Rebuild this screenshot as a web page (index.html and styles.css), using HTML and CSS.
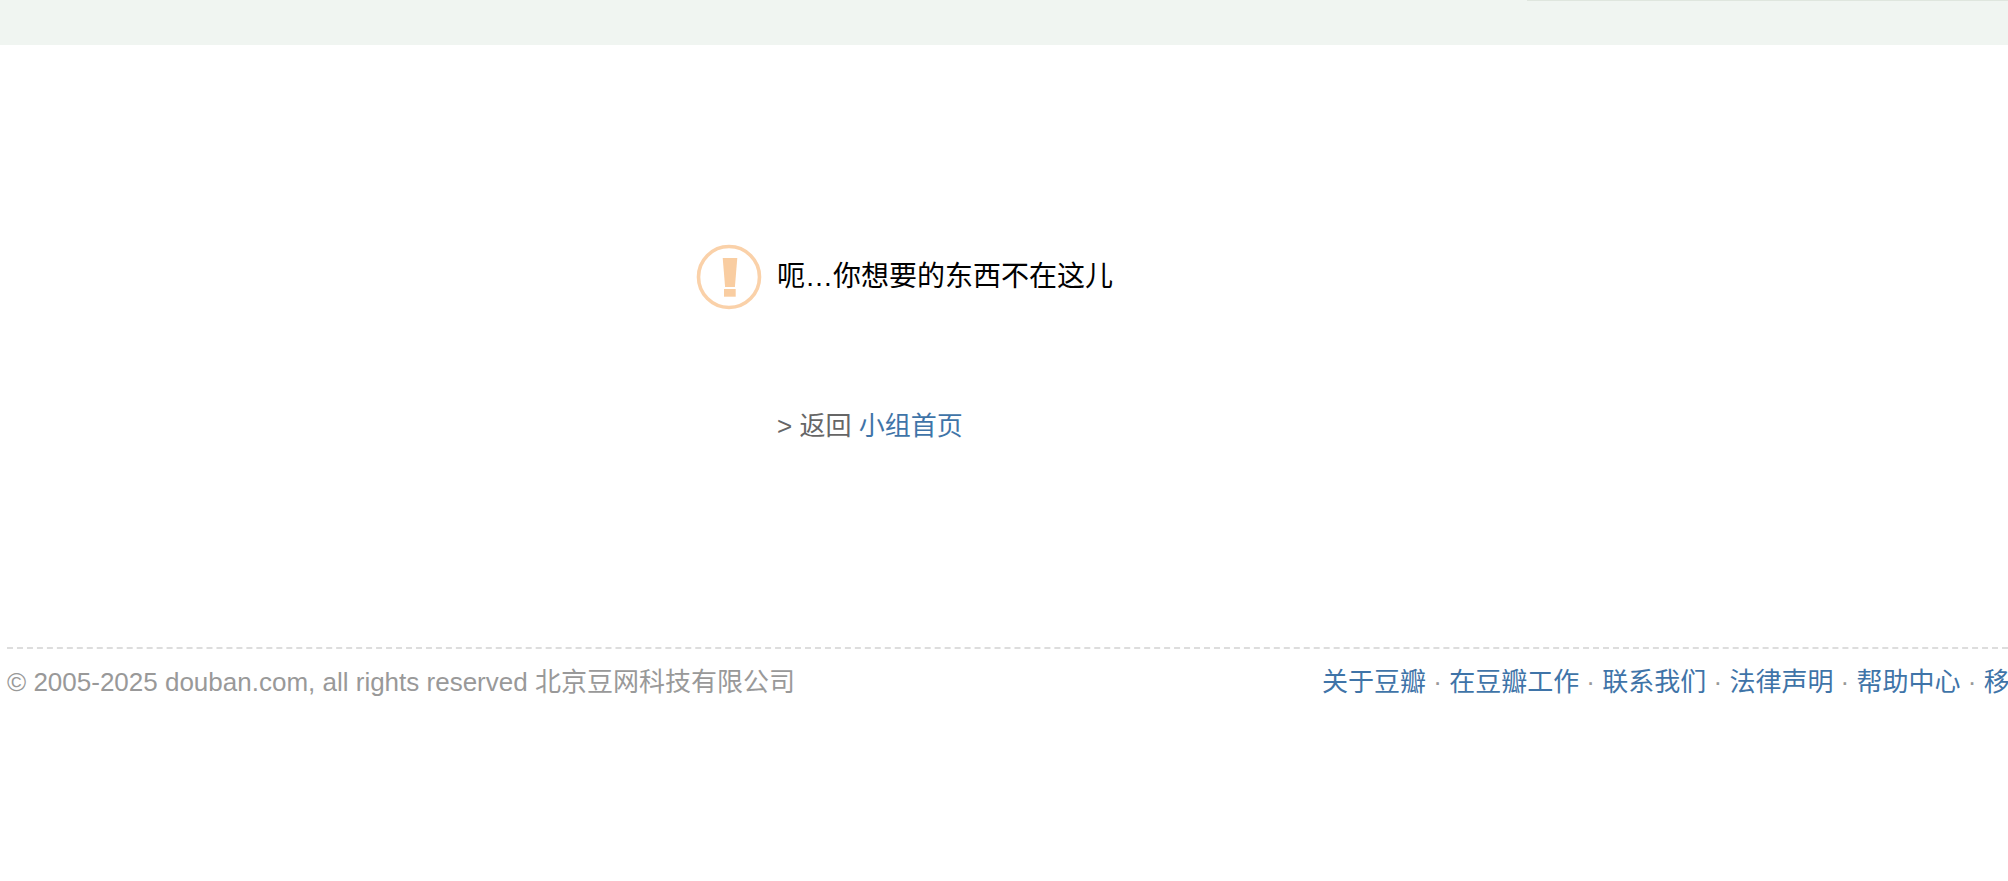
FILE: index.html
```html
<!DOCTYPE html>
<html lang="zh-CN">

<head>
    <meta charset="UTF-8">
    <meta name="viewport" content="width=device-width, initial-scale=1.0">
    <title>豆瓣</title>
    <link rel="stylesheet" href="styles.css">
</head>

<body>
    <div class="topbar">
        <div class="topbarLine"></div>
    </div>
    <div class="content">
        <div class="message">
            <svg class="warnIcon" width="66" height="66" viewBox="0 0 66 66">
                <circle cx="33" cy="33" r="30.5" fill="none" stroke="#fad1a9" stroke-width="3.6" />
                <path d="M26.7 14h14.6l-2.4 29h-9.8z" fill="#f9cda1" />
                <rect x="28" y="45" width="11.7" height="7.7" fill="#f9cda1" />
            </svg>
            <p class="messageText">呃…你想要的东西不在这儿</p>
        </div>
        <p class="back">&gt; 返回 <a href="#">小组首页</a></p>
    </div>
    <div class="footer">
        <span class="copyright">© 2005-2025 douban.com, all rights reserved 北京豆网科技有限公司</span>
        <span class="links">
            <a href="#">关于豆瓣</a> · <a href="#">在豆瓣工作</a> · <a href="#">联系我们</a> · <a href="#">法律声明</a> · <a href="#">帮助中心</a> · <a href="#">移动应用</a>
        </span>
    </div>
</body>

</html>
```

FILE: styles.css
```css
* {
    margin: 0;
    padding: 0;
    font-family: "Liberation Sans", "Noto Sans CJK SC", sans-serif;
}

html,
body {
    overflow: hidden;
    height: 100%;
    background: #fff;
}

a {
    color: #3f74a8;
    text-decoration: none;
}

.topbar {
    height: 45px;
    background: #f0f5f1;
    display: flex;
    justify-content: flex-end;
}

.topbarLine {
    width: 481px;
    height: 1px;
    background: #dfe6de;
}

.content {
    padding: 199px 0 0 696px;
    height: 403px;
}

.message {
    display: flex;
    align-items: center;
    gap: 15px;
}

.warnIcon {
    filter: blur(0.6px);
}

.messageText {
    font-size: 28px;
    color: #000;
    margin-bottom: 7px;
}

.back {
    margin-top: 95px;
    margin-left: 81px;
    font-size: 26px;
    color: #666;
}

.footer {
    margin-left: 7px;
    border-top: 2px dashed #ddd;
    padding-top: 12px;
    display: flex;
    white-space: nowrap;
    font-size: 26px;
    color: #999;
}

.copyright {
    flex: 0 0 1315px;
}

.links {
    flex: none;
}
```
